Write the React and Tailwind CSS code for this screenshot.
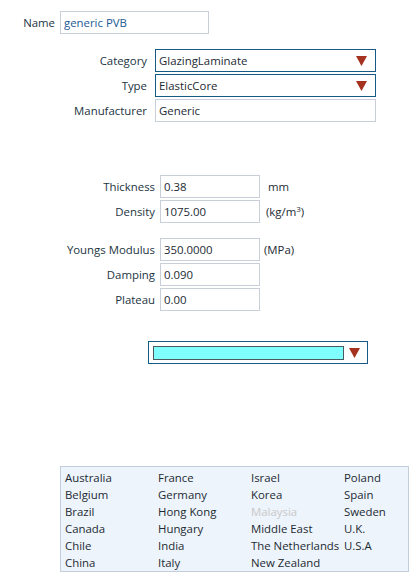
import React from "react";

const font = { fontFamily: '"Segoe UI", "Open Sans", "Noto Sans", sans-serif' };

function Arrow() {
  return (
    <svg width="11" height="10" viewBox="0 0 11 10" className="shrink-0">
      <path d="M0 0 H11 L5.5 10 Z" fill="#a5311f" />
    </svg>
  );
}

function Field({ children, className = "", color = "text-[#1c2a33]" }) {
  return (
    <div
      className={`h-[23px] shrink-0 border border-[#c9cfd9] bg-white px-[3px] flex items-center ${color} ${className}`}
    >
      {children}
    </div>
  );
}

function Combo({ children, className = "" }) {
  return (
    <div
      className={`h-[23px] shrink-0 border border-[#165a86] bg-white pl-[3px] pr-[8px] flex items-center justify-between text-[#1c2a33] ${className}`}
    >
      <span>{children}</span>
      <Arrow />
    </div>
  );
}

function Row({ label, labelW, gap, children }) {
  return (
    <div className="flex items-center">
      <div
        className="shrink-0 text-right text-[#22343f] whitespace-nowrap"
        style={{ width: labelW, marginRight: gap }}
      >
        {label}
      </div>
      {children}
    </div>
  );
}

const countries = [
  ["Australia", "France", "Israel", "Poland"],
  ["Belgium", "Germany", "Korea", "Spain"],
  ["Brazil", "Hong Kong", "Malaysia", "Sweden"],
  ["Canada", "Hungary", "Middle East", "U.K."],
  ["Chile", "India", "The Netherlands", "U.S.A"],
  ["China", "Italy", "New Zealand", ""],
];

export default function App() {
  return (
    <div
      className="w-[417px] h-[586px] bg-white text-[11.4px] leading-none overflow-hidden"
      style={font}
    >
      <div className="pt-[11px]">
        <Row label="Name" labelW={55} gap={5}>
          <Field className="w-[149px]" color="text-[#1a5a92]">
            generic PVB
          </Field>
        </Row>
      </div>

      <div className="mt-[15px] flex flex-col gap-[2px]">
        <Row label="Category" labelW={147} gap={8}>
          <Combo className="w-[221px]">GlazingLaminate</Combo>
        </Row>
        <Row label="Type" labelW={147} gap={8}>
          <Combo className="w-[221px]">ElasticCore</Combo>
        </Row>
        <Row label="Manufacturer" labelW={147} gap={8}>
          <Field className="w-[221px]">Generic</Field>
        </Row>
      </div>

      <div className="mt-[53px] flex flex-col gap-[2px]">
        <Row label="Thickness" labelW={155} gap={5}>
          <Field className="w-[100px]">0.38</Field>
          <span className="ml-[8px] text-[#1c2a33]">mm</span>
        </Row>
        <Row label="Density" labelW={155} gap={5}>
          <Field className="w-[100px]">1075.00</Field>
          <span className="ml-[6px] text-[#1c2a33]">
            (kg/m<sup className="text-[8px]">3</sup>)
          </span>
        </Row>
      </div>

      <div className="mt-[15px] flex flex-col gap-[2px]">
        <Row label="Youngs Modulus" labelW={155} gap={5}>
          <Field className="w-[100px]">350.0000</Field>
          <span className="ml-[4px] text-[#1c2a33]">(MPa)</span>
        </Row>
        <Row label="Damping" labelW={155} gap={5}>
          <Field className="w-[100px]">0.090</Field>
        </Row>
        <Row label="Plateau" labelW={155} gap={5}>
          <Field className="w-[100px]">0.00</Field>
        </Row>
      </div>

      <div className="mt-[30px] ml-[148px] w-[220px] h-[23px] border border-[#165a86] bg-white flex items-center pl-[4px] pr-[7px] justify-between">
        <div className="w-[191px] h-[14px] border border-[#4b5a5e] bg-[#80ffff]" />
        <Arrow />
      </div>

      <div className="mt-[102px] ml-[60px] w-[349px] h-[106px] border border-[#c3cedb] bg-[#eef4fb] pl-[4px] pt-[2px]">
        {countries.map((row, i) => (
          <div key={i} className="flex h-[17px] items-center">
            {row.map((c, j) => (
              <div
                key={j}
                className={`${j === 3 ? "w-[60px]" : "w-[93px]"} shrink-0 whitespace-nowrap ${
                  c === "Malaysia" ? "text-[#c8c8c8]" : "text-[#1c2a33]"
                }`}
              >
                {c}
              </div>
            ))}
          </div>
        ))}
      </div>
    </div>
  );
}
